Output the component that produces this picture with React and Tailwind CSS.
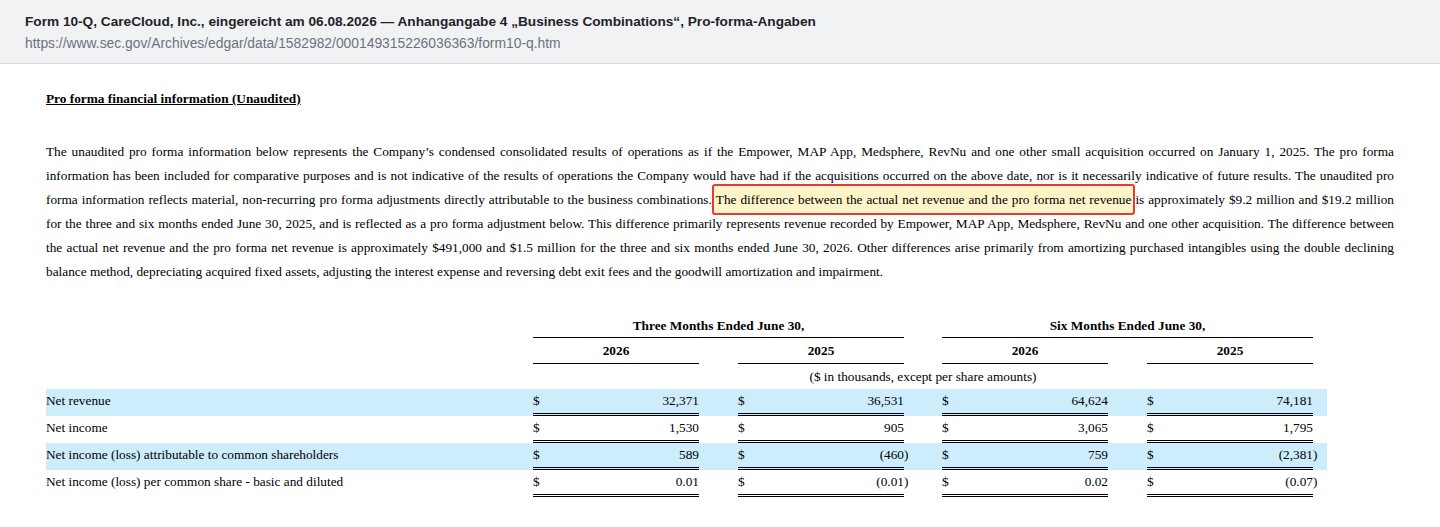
import React from "react";

const serif = { fontFamily: '"Liberation Serif", "Times New Roman", serif' };

const lines = [
  "The unaudited pro forma information below represents the Company’s condensed consolidated results of operations as if the Empower, MAP App, Medsphere, RevNu and one other small acquisition occurred on January 1, 2025. The pro forma",
  "information has been included for comparative purposes and is not indicative of the results of operations the Company would have had if the acquisitions occurred on the above date, nor is it necessarily indicative of future results. The unaudited pro",
  null,
  "for the three and six months ended June 30, 2025, and is reflected as a pro forma adjustment below. This difference primarily represents revenue recorded by Empower, MAP App, Medsphere, RevNu and one other acquisition. The difference between",
  "the actual net revenue and the pro forma net revenue is approximately $491,000 and $1.5 million for the three and six months ended June 30, 2026. Other differences arise primarily from amortizing purchased intangibles using the double declining",
];

const rows = [
  { label: "Net revenue", band: true, values: ["32,371", "36,531", "64,624", "74,181"] },
  { label: "Net income", band: false, values: ["1,530", "905", "3,065", "1,795"] },
  { label: "Net income (loss) attributable to common shareholders", band: true, values: ["589", "(460)", "759", "(2,381)"] },
  { label: "Net income (loss) per common share - basic and diluted", band: false, values: ["0.01", "(0.01)", "0.02", "(0.07)"] },
];

// gap widths after each value column; the last one is the paren cell
const gaps = ["w-[39px]", "w-[38px]", "w-[39px]", "w-[14px]"];

function ValueCell({ value, gap }) {
  const neg = value.endsWith(")");
  const shown = neg ? value.slice(0, -1) : value;
  return (
    <>
      <div className="flex w-[166px] h-[27px] justify-between border-b-[3px] border-double border-black leading-[24px]">
        <span>$</span>
        <span>{shown}</span>
      </div>
      <div className={`${gap} leading-[24px]`}>{neg ? ")" : ""}</div>
    </>
  );
}

export default function App() {
  return (
    <div className="min-h-screen bg-white">
      {/* Source header */}
      <div
        className="h-[64px] border-b border-[#d3dae2] bg-[#f1f2f4] px-[25px] pt-[12px]"
        style={{ fontFamily: '"Liberation Sans", Arial, sans-serif' }}
      >
        <div className="text-[13.65px] font-semibold leading-5 text-[#1f2328]">
          Form 10-Q, CareCloud, Inc., eingereicht am 06.08.2026 — Anhangangabe 4 „Business Combinations“, Pro-forma-Angaben
        </div>
        <div className="mt-[1px] text-[13.85px] leading-5 text-[#6b7280]">
          https://www.sec.gov/Archives/edgar/data/1582982/000149315226036363/form10-q.htm
        </div>
      </div>

      {/* Filing body */}
      <div className="px-[46px] pt-[25px] text-[13.3px] text-black" style={serif}>
        <div className="font-bold leading-5 underline">Pro forma financial information (Unaudited)</div>

        <div className="mt-[31px] w-[1348px] leading-[24px]">
          {lines.map((line, i) =>
            line === null ? (
              <div key={i} className="text-justify [text-align-last:justify]">
                forma information reflects material, non-recurring pro forma adjustments directly attributable to the business combinations.
                <span className="rounded-[3px] border-2 border-[#e23b3b] bg-[#fdf4c8] px-[2px] py-[6px]">
                  The difference between the actual net revenue and the pro forma net revenue
                </span>
                is approximately $9.2 million and $19.2 million
              </div>
            ) : (
              <div key={i} className="text-justify [text-align-last:justify]">
                {line}
              </div>
            )
          )}
          <div>
            balance method, depreciating acquired fixed assets, adjusting the interest expense and reversing debt exit fees and the goodwill amortization and impairment.
          </div>
        </div>

        {/* Pro forma table */}
        <div className="mt-[29px]">
          <div className="flex">
            <div className="w-[487px]" />
            <div className="h-[25px] w-[371px] border-b border-black text-center font-bold leading-[26px]">
              Three Months Ended June 30,
            </div>
            <div className="w-[38px]" />
            <div className="h-[25px] w-[371px] border-b border-black text-center font-bold leading-[26px]">
              Six Months Ended June 30,
            </div>
          </div>
          <div className="flex">
            <div className="w-[487px]" />
            {["2026", "2025", "2026", "2025"].map((y, i) => (
              <React.Fragment key={i}>
                <div className="h-[26px] w-[166px] border-b border-black text-center font-bold leading-[26px]">{y}</div>
                {i < 3 && <div className={gaps[i]} />}
              </React.Fragment>
            ))}
          </div>
          <div className="flex h-[25px] leading-[25px]">
            <div className="w-[487px]" />
            <div className="w-[780px] text-center">($ in thousands, except per share amounts)</div>
          </div>
          {rows.map((row) => (
            <div key={row.label} className={`flex w-[1281px] ${row.band ? "bg-[#cdedfd]" : ""}`}>
              <div className="w-[487px] leading-[24px]">{row.label}</div>
              {row.values.map((v, i) => (
                <ValueCell key={i} value={v} gap={gaps[i]} />
              ))}
            </div>
          ))}
        </div>
      </div>
    </div>
  );
}
